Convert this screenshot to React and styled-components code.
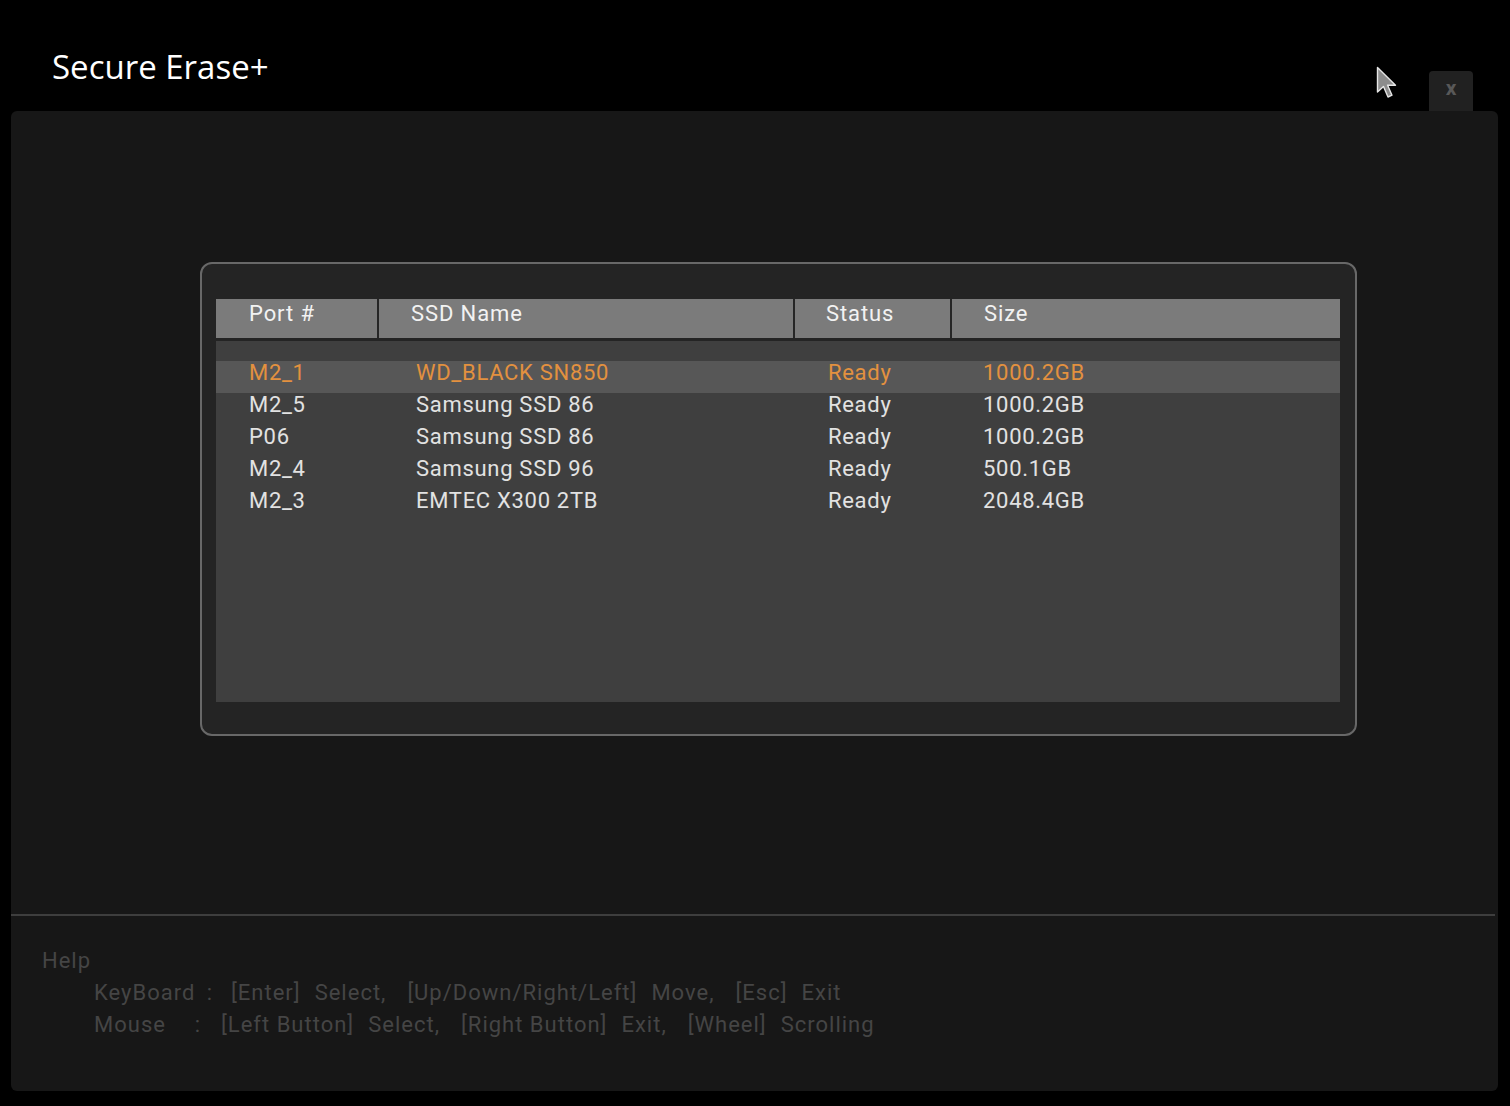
import React from 'react'
import styled, { createGlobalStyle } from 'styled-components'

const GlobalStyle = createGlobalStyle`
    html, body {
        margin: 0;
        padding: 0;
        background: #000;
    }
    body {
        font-family: Roboto, "Noto Sans", sans-serif;
    }
`

const Screen = styled.div`
    width: 1510px;
    height: 1106px;
    background: #000;
    display: flex;
    flex-direction: column;
    overflow: hidden;
`

const TopBar = styled.div`
    position: relative;
    height: 111px;
    display: flex;
    align-items: flex-end;
    justify-content: space-between;
    padding: 0 37px 0 52px;
    box-sizing: border-box;
`

const Title = styled.h1`
    margin: 0 0 28px 0;
    color: #fff;
    font-family: "Open Sans", "Noto Sans", sans-serif;
    font-size: 33px;
    font-weight: 400;
    line-height: 1;
`

const CloseButton = styled.button`
    width: 44px;
    height: 40px;
    border: none;
    border-radius: 4px 4px 0 0;
    background: #212121;
    color: #585858;
    font-family: Roboto, sans-serif;
    font-size: 21px;
    font-weight: 700;
    line-height: 34px;
    padding: 0 0 6px 0;
    cursor: pointer;
`

const Pointer = styled.svg`
    position: absolute;
    left: 1376px;
    top: 66px;
`

const Panel = styled.main`
    flex: 1;
    margin: 0 12px 15px 11px;
    background: #171717;
    border-radius: 6px;
    display: flex;
    flex-direction: column;
`

const Stage = styled.section`
    height: 803px;
    padding: 151px 0 0 189px;
    box-sizing: border-box;
`

const Frame = styled.div`
    width: 1157px;
    height: 474px;
    box-sizing: border-box;
    border: 2px solid #686868;
    border-radius: 12px;
    background: #242424;
    padding: 35px 15px 32px 14px;
    display: flex;
    flex-direction: column;
    gap: 3px;
`

const HeaderRow = styled.div`
    display: grid;
    grid-template-columns: 161px 414px 155px 1fr;
    column-gap: 2px;
    height: 39px;
    background: #262626;
`

const HeaderCell = styled.div`
    background: #7b7b7b;
    color: #f2f2f2;
    font-size: 22px;
    letter-spacing: 0.9px;
    line-height: 30px;
    padding-left: ${p => p.$indent}px;
`

const Body = styled.div`
    flex: 1;
    background: #3f3f3f;
    padding-top: 20px;
`

const Row = styled.div`
    display: grid;
    grid-template-columns: 167px 412px 155px 1fr;
    height: 32px;
    padding-left: 33px;
    background: ${p => (p.$selected ? '#575757' : 'transparent')};
    color: ${p => (p.$selected ? '#e3913f' : '#e2e2e2')};
    font-size: 22px;
    letter-spacing: 0.7px;
    line-height: 24px;
`

const Divider = styled.hr`
    margin: 0 3px 0 0;
    border: none;
    height: 2px;
    background: #3e3e3e;
`

const Help = styled.footer`
    padding: 29px 0 0 31px;
    color: #454545;
    font-size: 22px;
    letter-spacing: 1px;
    line-height: 32px;
`

const HelpLine = styled.div`
    display: flex;
    padding-left: 52px;
`

const HelpLabel = styled.span`
    width: ${p => p.$width}px;
    display: flex;
    justify-content: space-between;
    padding-right: ${p => p.$pad}px;
    box-sizing: border-box;
`

const HelpPairs = styled.span`
    display: flex;
    gap: 21px;
`

const HelpPair = styled.span`
    display: flex;
    gap: 14px;
`

const drives = [
    { port: 'M2_1', name: 'WD_BLACK SN850', status: 'Ready', size: '1000.2GB' },
    { port: 'M2_5', name: 'Samsung SSD 86', status: 'Ready', size: '1000.2GB' },
    { port: 'P06', name: 'Samsung SSD 86', status: 'Ready', size: '1000.2GB' },
    { port: 'M2_4', name: 'Samsung SSD 96', status: 'Ready', size: '500.1GB' },
    { port: 'M2_3', name: 'EMTEC X300 2TB', status: 'Ready', size: '2048.4GB' },
]

const columns = [
    { label: 'Port #', indent: 33 },
    { label: 'SSD Name', indent: 32 },
    { label: 'Status', indent: 31 },
    { label: 'Size', indent: 32 },
]

const helpLines = [
    {
        label: 'KeyBoard',
        width: 137,
        pad: 18,
        pairs: [
            ['[Enter]', 'Select,'],
            ['[Up/Down/Right/Left]', 'Move,'],
            ['[Esc]', 'Exit'],
        ],
    },
    {
        label: 'Mouse',
        width: 127,
        pad: 20,
        pairs: [
            ['[Left Button]', 'Select,'],
            ['[Right Button]', 'Exit,'],
            ['[Wheel]', 'Scrolling'],
        ],
    },
]

export default function App() {
    return (
        <Screen>
            <GlobalStyle />
            <TopBar>
                <Title>Secure Erase+</Title>
                <CloseButton>x</CloseButton>
                <Pointer width="22" height="36" viewBox="0 0 22 36">
                    <path
                        d="M1.5 1.5 L1.5 26 L7.5 20.5 L12 31 L16 29.2 L11.6 19.2 L19.5 19.2 Z"
                        fill="#8c8c8c"
                        stroke="#e6e6e6"
                        strokeWidth="1.4"
                        strokeLinejoin="round"
                    />
                </Pointer>
            </TopBar>
            <Panel>
                <Stage>
                    <Frame>
                        <HeaderRow>
                            {columns.map(c => (
                                <HeaderCell key={c.label} $indent={c.indent}>
                                    {c.label}
                                </HeaderCell>
                            ))}
                        </HeaderRow>
                        <Body>
                            {drives.map((d, i) => (
                                <Row key={d.port} $selected={i === 0}>
                                    <span>{d.port}</span>
                                    <span>{d.name}</span>
                                    <span>{d.status}</span>
                                    <span>{d.size}</span>
                                </Row>
                            ))}
                        </Body>
                    </Frame>
                </Stage>
                <Divider />
                <Help>
                    <div>Help</div>
                    {helpLines.map(line => (
                        <HelpLine key={line.label}>
                            <HelpLabel $width={line.width} $pad={line.pad}>
                                <span>{line.label}</span>
                                <span>:</span>
                            </HelpLabel>
                            <HelpPairs>
                                {line.pairs.map(([key, action]) => (
                                    <HelpPair key={key}>
                                        <span>{key}</span>
                                        <span>{action}</span>
                                    </HelpPair>
                                ))}
                            </HelpPairs>
                        </HelpLine>
                    ))}
                </Help>
            </Panel>
        </Screen>
    )
}
